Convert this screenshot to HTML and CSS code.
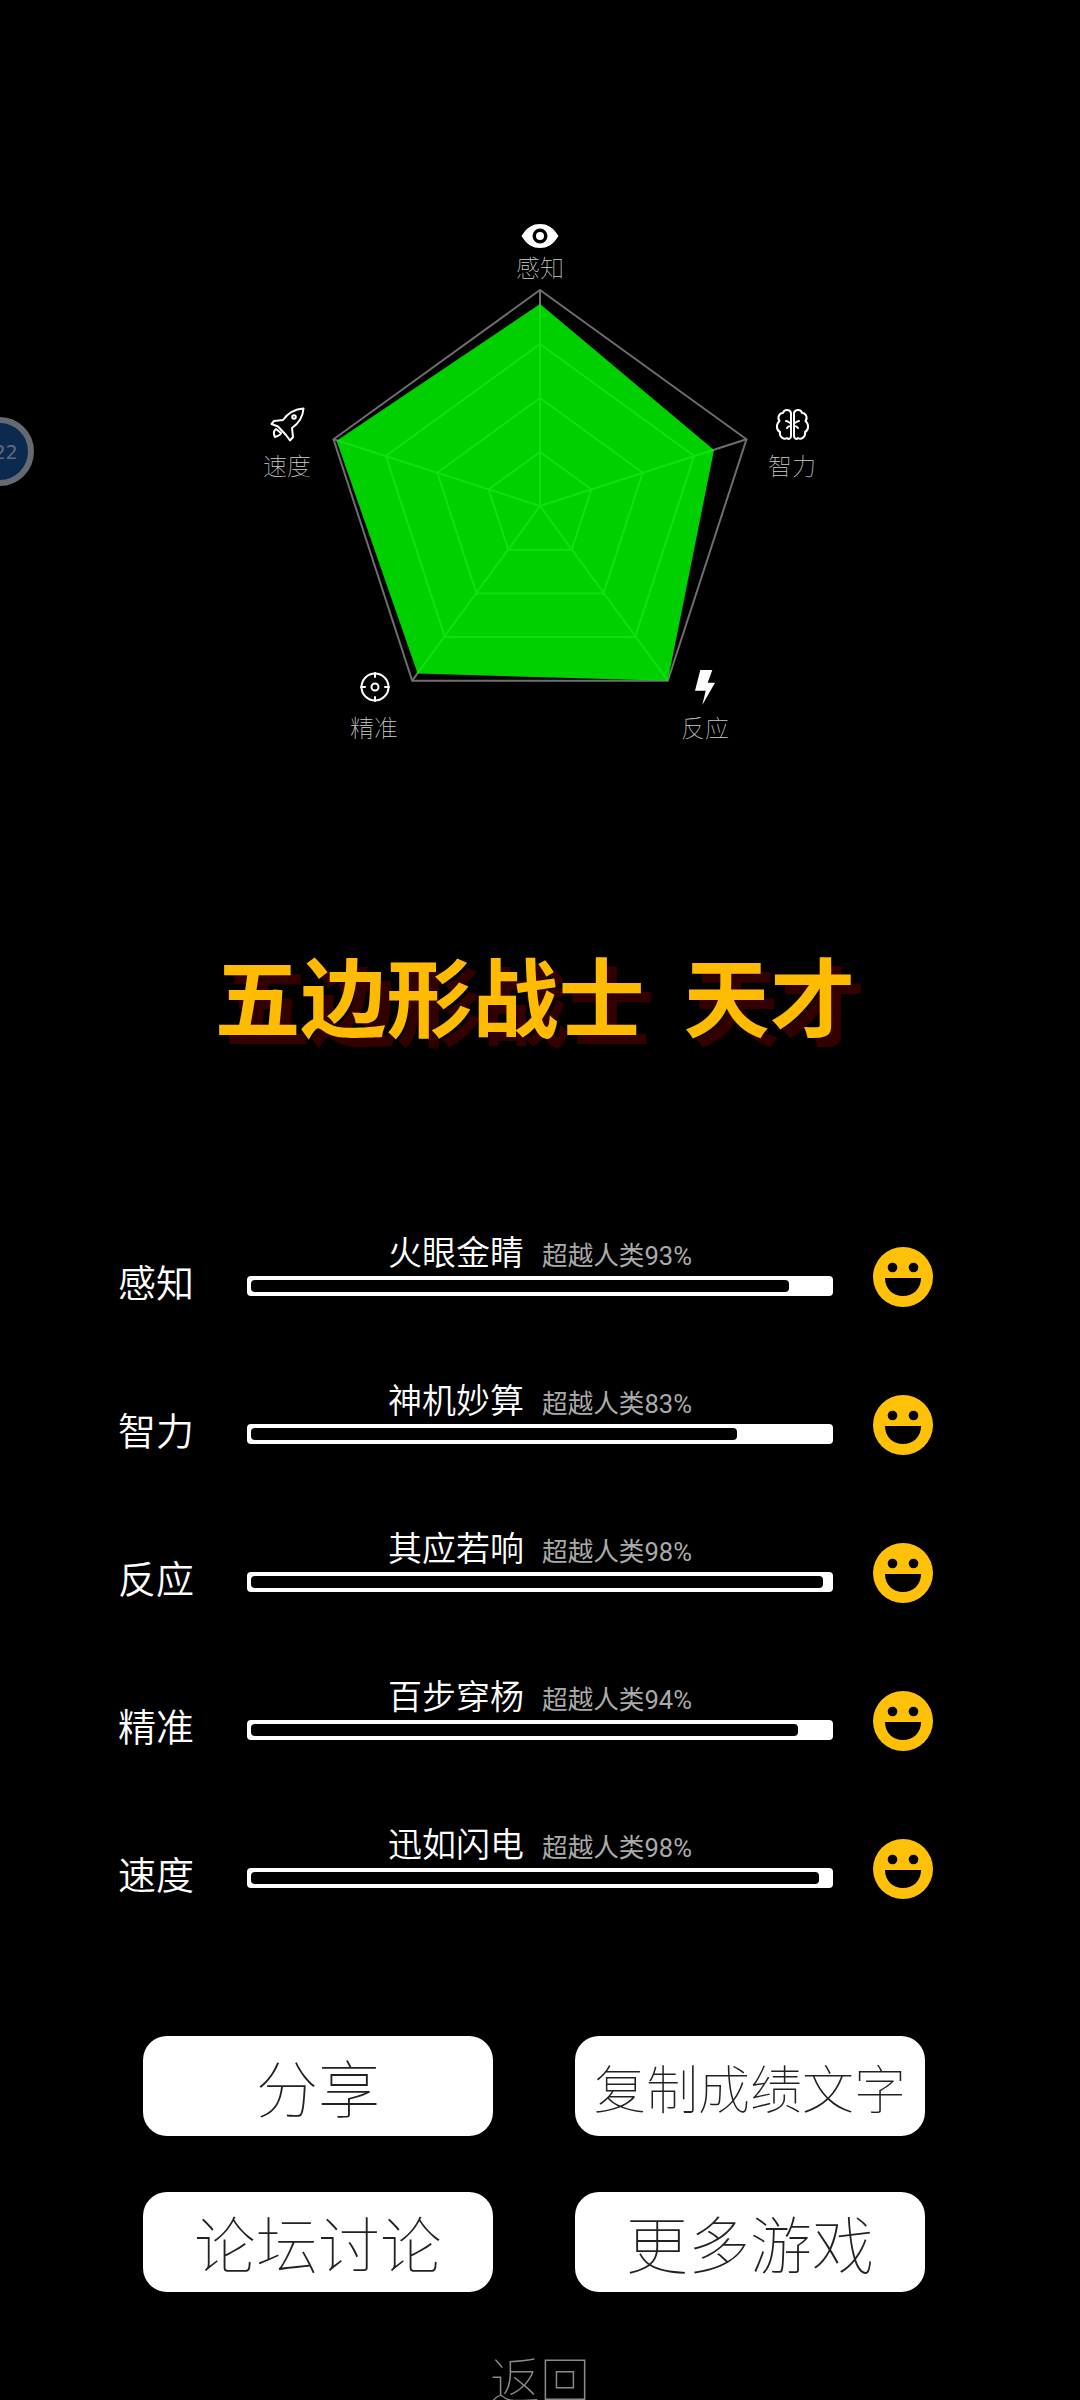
FILE: index.html
```html
<!DOCTYPE html>
<html lang="zh-CN">
<head>
<meta charset="utf-8">
<title>五边形战士</title>
<link rel="stylesheet" href="styles.css">
</head>
<body>
<svg class="defs" width="0" height="0" aria-hidden="true">
  <symbol id="smile" viewBox="0 0 60 60">
    <circle cx="30" cy="30" r="30" fill="#ffc107"/>
    <circle cx="19.5" cy="20.5" r="4.8" fill="#000"/>
    <circle cx="40.5" cy="20.5" r="4.8" fill="#000"/>
    <path d="M12 31 H48 C48 42 40 49 30 49 C20 49 12 42 12 31 Z" fill="#000"/>
  </symbol>
</svg>
<main class="page">
  <div class="float-badge"><span class="float-badge-text">22</span></div>

  <section class="radar">
    <svg class="radar-svg" width="1080" height="800" viewBox="0 0 1080 800">
      <g class="grid">
        <polygon points="540,290 746.5,439.3 667.8,680.7 412.2,680.7 333.5,439.3"/>
        <polygon points="540,344 694.1,455.9 635.2,637.1 444.8,637.1 385.9,455.9"/>
        <polygon points="540,398 642.7,472.6 603.5,593.4 476.5,593.4 437.3,472.6"/>
        <polygon points="540,452 591.4,489.3 571.7,549.7 508.3,549.7 488.6,489.3"/>
        <path d="M540 506 L540 290 M540 506 L746.5 439.3 M540 506 L667.8 680.7 M540 506 L412.2 680.7 M540 506 L333.5 439.3"/>
      </g>
      <polygon class="score" points="540,304 714,450 667.8,680.7 417.6,673.6 336.6,440.7"/>

      <path class="icon-fill" fill-rule="evenodd" d="M521.5 236 C527 227 533 224 540 224 C547 224 553 227 558.5 236 C553 245 547 248 540 248 C533 248 527 245 521.5 236 Z M540 228.5 A7.5 7.5 0 1 0 540 243.5 A7.5 7.5 0 1 0 540 228.5 Z"/>
      <circle class="icon-fill" cx="540" cy="236" r="4"/>
      <text class="axis-label" x="540" y="277">感知</text>

      <g class="icon-line brain">
        <path d="M791 413 C790 409 784 409 783 413 C779 413 777 418 779.5 421 C776 424 776 430 780 432 C779 437 784 440 787 438 C789 440 791 438 791 436 Z"/>
        <path d="M794 413 C795 409 801 409 802 413 C806 413 808 418 805.5 421 C809 424 809 430 805 432 C806 437 801 440 798 438 C796 440 794 438 794 436 Z"/>
        <path d="M786 421 C788 421 789 423 791 423 M787 428 C788 426 789 426 791 426 M799 421 C797 421 796 423 794 423 M798 428 C797 426 796 426 794 426"/>
      </g>
      <text class="axis-label" x="792" y="475">智力</text>

      <polygon class="icon-fill" points="700.3,670 712.3,670 707.7,682.7 715,682.7 702.3,705 705.7,690.7 695,690.7"/>
      <text class="axis-label" x="705" y="737">反应</text>

      <g class="icon-line target">
        <circle cx="375" cy="687" r="13.5"/>
        <circle cx="375" cy="687" r="3.5"/>
        <path d="M375 673 V677 M375 697 V701 M361 687 H365 M385 687 H389"/>
      </g>
      <text class="axis-label" x="374" y="737">精准</text>

      <g class="icon-line rocket">
        <path d="M303.5 408.5 C296 409 288 413 283 420 L274 421 L271.5 424 L278 426.5 L286 435 L290 440.5 L293 437 L292 428 C299 423 303 416 303.5 408.5 Z"/>
        <path d="M276 429 C273 431 274 435 275 437 C278 436 281 435 281 433 Z"/>
        <circle cx="294" cy="417" r="1.8"/>
      </g>
      <text class="axis-label" x="287" y="475">速度</text>
    </svg>
  </section>

  <h1 class="title">五边形战士&nbsp;&nbsp;天才</h1>

  <section class="stats">
    <div class="stat-row">
      <div class="stat-name">感知</div>
      <div class="stat-main">
        <div class="stat-head"><span class="stat-title">火眼金睛</span><span class="stat-note">超越人类93%</span></div>
        <div class="bar"><div class="bar-fill" style="width:93%"></div></div>
      </div>
      <svg class="smile" width="60" height="60"><use href="#smile"/></svg>
    </div>
    <div class="stat-row">
      <div class="stat-name">智力</div>
      <div class="stat-main">
        <div class="stat-head"><span class="stat-title">神机妙算</span><span class="stat-note">超越人类83%</span></div>
        <div class="bar"><div class="bar-fill" style="width:84%"></div></div>
      </div>
      <svg class="smile" width="60" height="60"><use href="#smile"/></svg>
    </div>
    <div class="stat-row">
      <div class="stat-name">反应</div>
      <div class="stat-main">
        <div class="stat-head"><span class="stat-title">其应若响</span><span class="stat-note">超越人类98%</span></div>
        <div class="bar"><div class="bar-fill" style="width:99%"></div></div>
      </div>
      <svg class="smile" width="60" height="60"><use href="#smile"/></svg>
    </div>
    <div class="stat-row">
      <div class="stat-name">精准</div>
      <div class="stat-main">
        <div class="stat-head"><span class="stat-title">百步穿杨</span><span class="stat-note">超越人类94%</span></div>
        <div class="bar"><div class="bar-fill" style="width:94.7%"></div></div>
      </div>
      <svg class="smile" width="60" height="60"><use href="#smile"/></svg>
    </div>
    <div class="stat-row">
      <div class="stat-name">速度</div>
      <div class="stat-main">
        <div class="stat-head"><span class="stat-title">迅如闪电</span><span class="stat-note">超越人类98%</span></div>
        <div class="bar"><div class="bar-fill" style="width:98.2%"></div></div>
      </div>
      <svg class="smile" width="60" height="60"><use href="#smile"/></svg>
    </div>
  </section>

  <section class="actions">
    <button class="action" type="button">分享</button>
    <button class="action action-long" type="button">复制成绩文字</button>
    <button class="action" type="button">论坛讨论</button>
    <button class="action" type="button">更多游戏</button>
  </section>

  <div class="back">返回</div>
</main>
</body>
</html>
```

FILE: styles.css
```css
* { box-sizing: border-box; }

html, body {
  margin: 0;
  padding: 0;
  background: #000;
}

body {
  font-family: "Noto Sans CJK SC", "Noto Sans", sans-serif;
  color: #fff;
}

.defs { position: absolute; }

.page {
  position: relative;
  width: 1080px;
  height: 2400px;
  overflow: hidden;
  background: #000;
}

.float-badge {
  position: absolute;
  left: -35px;
  top: 417px;
  width: 69px;
  height: 69px;
  border-radius: 50%;
  border: 6px solid #666a6e;
  background: #0c2a50;
  display: flex;
  align-items: center;
  justify-content: center;
}

.float-badge-text {
  font-family: "DejaVu Sans Mono", monospace;
  font-size: 20px;
  color: #5f6b7b;
  margin-left: 12px;
}

.radar { height: 800px; }
.radar-svg { display: block; }

.grid polygon, .grid path {
  fill: none;
  stroke: #6e6e6e;
  stroke-width: 2;
}

.score {
  fill: rgb(0, 245, 0);
  fill-opacity: 0.85;
}

.axis-label {
  font-size: 24px;
  font-weight: 100;
  fill: #cfcfcf;
  text-anchor: middle;
}

.icon-fill { fill: #fff; }

.icon-line {
  fill: none;
  stroke: #fff;
  stroke-width: 2;
  stroke-linejoin: round;
  stroke-linecap: round;
}

.title {
  margin: 144px 0 0;
  padding-right: 10px;
  height: 100px;
  line-height: 100px;
  text-align: center;
  font-size: 86px;
  font-weight: 600;
  color: #ffbb00;
  text-shadow: 10px 9px 0 #330000;
  white-space: nowrap;
}

.stats {
  margin-top: 188px;
  padding-left: 118px;
}

.stat-row {
  display: flex;
  align-items: flex-start;
  height: 148px;
}

.stat-name {
  width: 129px;
  margin-top: 27px;
  font-size: 38px;
  line-height: 44px;
  font-weight: 350;
  color: #fff;
}

.stat-main { width: 586px; }

.stat-head {
  display: flex;
  justify-content: center;
  align-items: baseline;
  gap: 18px;
  height: 44px;
  line-height: 37px;
}

.stat-title {
  font-size: 34px;
  font-weight: 350;
  color: #fff;
}

.stat-note {
  font-family: "Roboto", "Noto Sans CJK SC", sans-serif;
  font-size: 25.6px;
  color: #aaa;
}

.bar {
  height: 20px;
  padding: 4px;
  background: #fff;
  border-radius: 4px;
}

.bar-fill {
  height: 12px;
  background: #000;
  border-radius: 4px;
}

.smile {
  display: block;
  margin-left: 40px;
  margin-top: 15px;
}

.actions {
  margin-top: 64px;
  padding-left: 143px;
  display: grid;
  grid-template-columns: 350px 350px;
  grid-auto-rows: 100px;
  column-gap: 82px;
  row-gap: 56px;
}

.action {
  border: 0;
  padding: 0;
  background: #fff;
  border-radius: 24px;
  font-family: inherit;
  font-size: 62px;
  font-weight: 100;
  color: #222;
  white-space: nowrap;
}

.action-long { font-size: 52px; }

.back {
  margin-top: 55px;
  text-align: center;
  font-size: 50px;
  line-height: 60px;
  font-weight: 100;
  color: #8a8a8a;
}
```
